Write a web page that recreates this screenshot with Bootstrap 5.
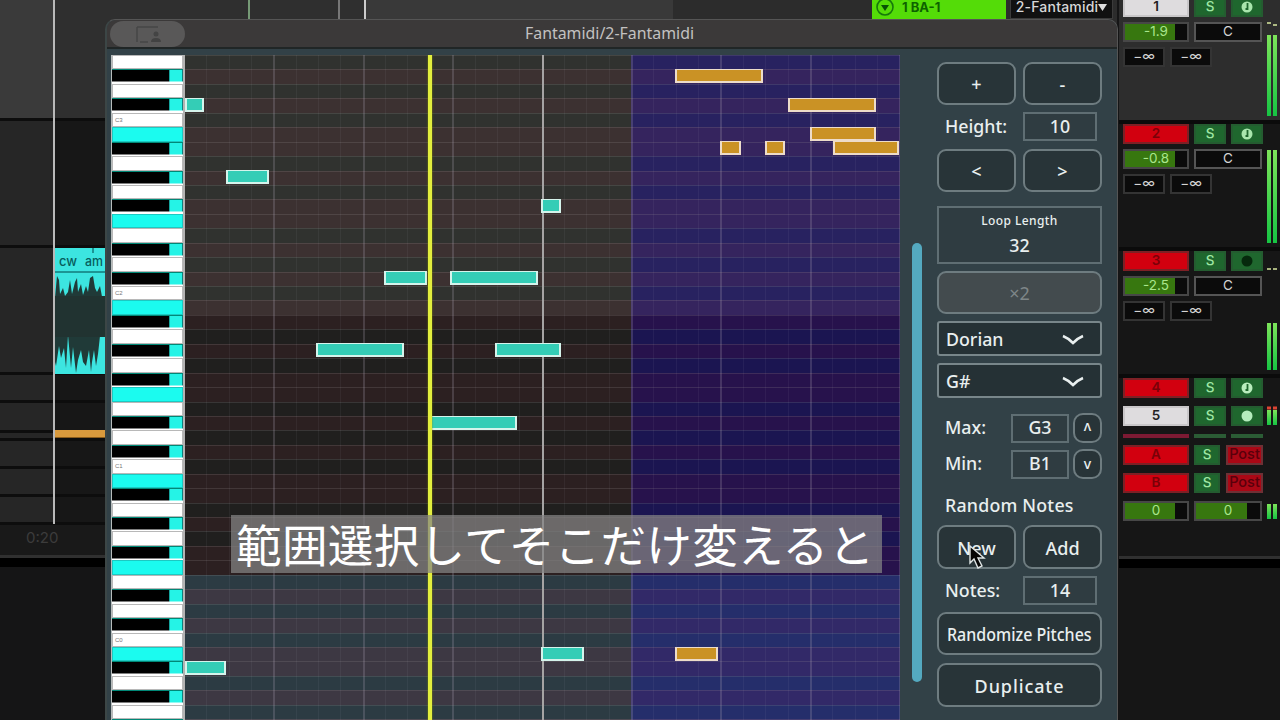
<!DOCTYPE html>
<html lang="ja">
<head>
<meta charset="utf-8">
<meta name="viewport" content="width=device-width, initial-scale=1">
<title>Fantamidi/2-Fantamidi</title>
<link rel="stylesheet" href="https://cdn.jsdelivr.net/npm/bootstrap@5.3.0/dist/css/bootstrap.min.css">
<style>
body{width:1280px;height:720px;overflow:hidden;background:#151516;font-family:"Noto Sans","Open Sans",sans-serif;line-height:1}
/* timeline behind the plugin window */
.lanes{width:1117px}
.lane{border-bottom:3px solid #0d0d0d;background:linear-gradient(90deg,#262626 55px,#171717 55px);flex:none}
.lane-top{background:linear-gradient(90deg,#3a3a3a 55px,#2f2f2f 55px 365px,#393939 365px 673px,#2c2c2c 673px)}
.wave{left:55px;top:248px}
.orange{left:55px;top:430px;width:50px;height:8px;background:#d99a3d;border-bottom:1px solid #8a5c1c}
.cursor-line{left:53px;top:0;width:2px;height:524px;background:#b9b9b9}
.tick{top:0;width:2px;height:20px;background:#a9a9a9}
.clock{left:26px;top:528px;font:15px Inter,sans-serif;color:#3c3c3c}
.clip-tag{left:872px;top:-6px;width:134px;height:25px;background:#54dc08;color:#0d6200;font:700 13px Inter,sans-serif;padding-left:4px}
.slot-tag{left:1010px;top:-6px;width:103px;height:25px;background:#111;border:1px solid #3b3b3b;color:#d8d8d8;font:500 14px Inter,sans-serif;letter-spacing:.2px;white-space:nowrap}
/* mixer */
.mixer{left:1119px;top:0;width:161px;height:720px;background:#161616;font-family:Inter,sans-serif}
.strip{height:127px;padding:0 0 0 4px;border-bottom:4px solid #0b0b0b;flex:none}
.cell{height:20px;border:2px solid #555;font-size:13.5px;color:#d4d4d4;background:#0b0b0b;display:flex;align-items:center;justify-content:center;flex:none}
.w-a{width:66px}.w-b{width:32px}.w-c{width:32px}.w-d{width:68px}.w-e{width:42px}.w-s{width:26px}.w-p{width:37px}
.cell.red{background:#d2000f;border-color:#7e2025;color:#7a0008;font-weight:600}
.cell.lit{background:#dedcde;border-color:#c9c7c9;color:#222;font-weight:600}
.cell.solo{background:#1f672e;border-color:#245c30;color:#9ee8a4;font-weight:500}
.cell.post{background:#aa0715;border-color:#6f3035;color:#59000b;font-size:14.5px;font-weight:500}
.cell.vol{background:linear-gradient(90deg,#37770f 80%,#0b0b0b 80%);border-color:#474747;color:#a9e68c}
.cell.send{border-color:#343434}
.mixer-end{height:12px;background:#000;border-top:3px solid #303030}
/* plugin window */
.plugin{left:105px;top:19px;width:1013px;height:710px;background:#324147;border-radius:10px 10px 0 0;border:1px solid #555;border-left:2px solid #3c4646;overflow:hidden}
.bar{height:29px;background:#3b3939;border-bottom:2px solid #202626;color:#c3c1c1;font-size:15.9px;padding-right:5px}
.pill{left:3px;top:1px;width:75px;height:26px;border-radius:13px;background:#595858}
.keys{width:74px;background:#fff;border-right:2px solid #b3b3b3;border-left:1px solid #b6bcbc}
.key{height:14.45px;flex:none}
.key.w{border:1px solid #b8b8b8;background:#fff;font:6px "Liberation Sans",sans-serif;color:#777;padding:3px 0 0 2px}
.key.hi{background:#1bfbef;border:1px solid #1cc9c2}
.key.b{background:linear-gradient(90deg,#000 57px,#15a49e 57px,#15a49e 58px,#25f3e6 58px,#25f3e6 70px,#127f7c 70px);background-size:100% 11.5px;background-repeat:no-repeat;border-top:1px solid #087}
.roll{width:715px;overflow:hidden}
.row-l{height:14.45px;flex:none}
.row-l.edge{border-top:1px solid rgba(155,150,150,.2)}
.vline{top:0;bottom:0;width:1px;background:rgba(190,190,200,.07)}
.vline.beat{width:2px;background:rgba(170,165,180,.24)}
.vline.bar-l{width:2px;background:#a5a3a3}
.note{height:14px;background:#34cdb6;border:2px solid #d5f4ec;border-top-width:1.5px}
.note.sel{background:#ca9225;border-color:#eddcca}
.play{left:243px;top:0;bottom:0;width:4px;background:#e2ee3e;box-shadow:0 0 2px #8b9400}
.tools{width:165px;color:#e9efef;font-size:17.8px;font-weight:500}
.tools .btn{height:43px;border:2px solid #6e7c80;border-radius:9px;background:#283438;color:#e9efef;font-size:18px;font-weight:500;padding:1px 0 0;line-height:1;flex:none;white-space:nowrap}
.tools .btn.half{width:79px}
.tools .btn.tiny{width:29px;height:30px;font-size:14px;border-radius:10px;padding:0}
.tools .btn.off{background:#434b4e;color:#7e8688;opacity:1;font-weight:400}
.numbox{border:2px solid #5f6e73;background:#2f3c41;display:flex;align-items:center;justify-content:center;height:29px}
.drop{height:35px;border:2px solid #78868a;border-radius:3px;background:#253135;padding:2px 16px 0 7px;flex:none}
.scroller{left:805px;top:223px;width:10px;height:439px;border-radius:5px;background:#54a9c0}
.caption-jp{left:231px;top:515px;width:651px;height:58px;background:rgba(133,133,133,.72);color:#fff;font-family:"Noto Sans CJK JP",sans-serif;font-size:45.6px;letter-spacing:.3px;line-height:57px;padding-left:5px;white-space:nowrap}
</style>
</head>
<body class="position-relative">
<main>
<section class="lanes d-flex flex-column">
  <div class="lane lane-top" style="height:121px"></div>
  <div class="lane" style="height:127px"></div>
  <div class="lane" style="height:127px"></div>
  <div class="lane" style="height:28px"></div>
  <div class="lane" style="height:30px"></div>
  <div class="lane" style="height:8px"></div>
  <div class="lane" style="height:28px"></div>
  <div class="lane" style="height:28px"></div>
  <div class="lane" style="height:28px"></div>
  <div style="height:30px;background:#191919"></div>
  <div class="mixer-end"></div>
</section>
<div class="cursor-line position-absolute"></div>
<div class="tick position-absolute" style="left:248px;background:#769a76"></div>
<div class="tick position-absolute" style="left:338px;background:#777"></div>
<div class="tick position-absolute" style="left:364px;background:#ccc"></div>
<svg class="wave position-absolute" width="52" height="126" viewBox="0 0 52 126">
  <rect width="52" height="126" fill="#3ce5e0"/>
  <path d="M0 24H52M38 0V5" stroke="#127b7b" stroke-width="1.5"/>
  <path d="M0 50l2-22 2 4 1 14 3-6 2 8 3-4 2-12 2 14 3-12 2-4 1 14 3-8 2 11 3-9 2 6 2-14 3-2 2 12 2 4 3-6 3 16V86l-3 2-2 18-2 12-2-16-2 12-1 10-2-22-3 16-3-4-2-12-3 10-2 13-3-26-2 21-3-33-2 33-2-20-3 10-2-12-3 20-2-8-1-26Z" fill="#203a38"/>
  <path d="M0 48H52V89H0Z" fill="#213331"/>
  <text x="4" y="18" font-family="Inter" font-size="13" font-weight="500" fill="#075d5c">cw</text>
  <text x="30" y="18" font-family="Inter" font-size="13" font-weight="500" textLength="18" lengthAdjust="spacingAndGlyphs" fill="#075d5c">am</text>
</svg>
<div class="orange position-absolute"></div>
<div class="clock position-absolute">0:20</div>
<div class="clip-tag position-absolute d-flex align-items-center gap-1">
  <svg width="18" height="20" viewBox="0 0 18 20"><circle cx="9" cy="10" r="8" fill="none" stroke="#16790b" stroke-width="1.6"/><path d="M5 8h8l-4 6Z" fill="#075204"/></svg><span class="ms-1">1 BA-1</span>
</div>
<div class="slot-tag position-absolute d-flex align-items-center justify-content-center"><span>2-Fantamidi</span><svg class="flex-shrink-0" width="9" height="8"><path d="M0 1h9L4.500 8Z" fill="#ddd"/></svg></div>

<aside class="mixer position-absolute">
  <div id="mix" class="d-flex flex-column" style="margin-top:-3.5px"></div>
  <svg class="position-absolute top-0" style="left:146px" width="15" height="560" id="meters"></svg>
</aside>

<section class="plugin position-absolute">
  <header class="bar position-relative d-flex align-items-center justify-content-center">
    <div class="pill position-absolute"><svg width="75" height="26"><path d="M27 6V21M27 6h21M30 21h8" stroke="#464646" stroke-width="1.5" fill="none"/><circle cx="46" cy="13" r="2.500" fill="#444"/><path d="M41 21q0-4 5-4t5 4Z" fill="#424242"/></svg></div>
    <span>Fantamidi/2-Fantamidi</span>
  </header>
  <div class="d-flex" style="padding-top:6px;padding-left:4px">
    <div id="keys" class="keys d-flex flex-column"></div>
    <div id="roll" class="roll position-relative"></div>
    <div class="tools d-flex flex-column" style="margin-left:37px;padding-top:7px">
      <div class="d-flex justify-content-between"><button class="btn half">+</button><button class="btn half">-</button></div>
      <div class="d-flex align-items-center justify-content-between" style="margin-top:7px;padding:0 5px 0 8px"><span>Height:</span><div class="numbox" style="width:74px">10</div></div>
      <div class="d-flex justify-content-between" style="margin-top:8px"><button class="btn half">&lt;</button><button class="btn half">&gt;</button></div>
      <div class="numbox flex-column" style="height:58px;margin-top:14px;gap:10px"><span style="font-size:12px;letter-spacing:.4px">Loop Length</span><span>32</span></div>
      <button class="btn off" style="margin-top:7px">×2</button>
      <div class="drop d-flex align-items-center justify-content-between" style="margin-top:7px"><span>Dorian</span><svg width="22" height="12"><path d="M1 2q5 2 10 7 5-5 10-7" fill="none" stroke="#e9efef" stroke-width="2.500"/></svg></div>
      <div class="drop d-flex align-items-center justify-content-between" style="margin-top:7px"><span>G#</span><svg width="22" height="12"><path d="M1 2q5 2 10 7 5-5 10-7" fill="none" stroke="#e9efef" stroke-width="2.500"/></svg></div>
      <div class="d-flex align-items-center" style="margin-top:15px;padding-left:8px"><span>Max:</span><div class="numbox ms-auto" style="width:58px;margin-right:4px">G3</div><button class="btn tiny"><span class="d-inline-block" style="transform:scaleY(-1)">v</span></button></div>
      <div class="d-flex align-items-center" style="margin-top:6px;padding-left:8px"><span>Min:</span><div class="numbox ms-auto" style="width:58px;margin-right:4px">B1</div><button class="btn tiny">v</button></div>
      <div style="margin-top:18px;padding-left:8px;height:17px;white-space:nowrap;letter-spacing:.2px">Random Notes</div>
      <div class="d-flex justify-content-between" style="margin-top:11px"><button class="btn half" style="height:44px">New</button><button class="btn half" style="height:44px">Add</button></div>
      <div class="d-flex align-items-center justify-content-between" style="margin-top:7px;padding:0 5px 0 8px"><span>Notes:</span><div class="numbox" style="width:74px">14</div></div>
      <button class="btn" style="margin-top:7px"><span class="d-inline-block" style="transform:scaleX(.89);margin:0 -12px">Randomize Pitches</span></button>
      <button class="btn" style="margin-top:8px;height:44px;letter-spacing:.9px">Duplicate</button>
    </div>
  </div>
  <div class="scroller position-absolute"></div>
</section>
<div class="caption-jp position-absolute">範囲選択してそこだけ変えると</div>
<svg class="position-absolute" style="left:969px;top:545px" width="18" height="25" viewBox="0 0 18 25"><path d="M1 1V18l4-4 4 9 4-2-4-8h6Z" fill="#050505" stroke="#dfe5e5" stroke-width="1.400"/></svg>
</main>
<script src="https://cdn.jsdelivr.net/npm/bootstrap@5.3.0/dist/js/bootstrap.bundle.min.js"></script>
<script>
const ROWS = 47, H = 14.45;
const black = [1,3,6,8,10], labels = {4:'C3',16:'C2',28:'C1',40:'C0'};
const octave = [
  {n:'#30322f', s:'#3c3131', sn:'#282260', ss:'#35245e'},
  {n:'#201f1e', s:'#2c2021', sn:'#1b1551', ss:'#27124c'},
  {n:'#2c3b43', s:'#3d3843', sn:'#252e6b', ss:'#322968'}];
let keys = '', rows = '';
for (let i = 0; i < ROWS; i++) {
  const k = i % 12, isB = black.includes(k), isC = k === 5 || k === 11;
  keys += `<div class="key ${isB ? 'b' : isC ? 'w hi' : 'w'}">${labels[i] || ''}</div>`;
  const o = octave[i < 18 ? 0 : i < 36 ? 1 : 2], sc = isB || isC;
  rows += `<div class="row-l edge" style="background:linear-gradient(90deg,${sc ? o.s : o.n} 446px,${sc ? o.ss : o.sn} 446px)"></div>`;
}
document.getElementById('keys').innerHTML = keys;
let over = '';
for (let j = 1; j <= 32; j++) {
  const x = j * 22.36 - 1.2;
  over += `<div class="vline position-absolute ${j === 16 ? 'bar-l' : j % 4 ? '' : 'beat'}" style="left:${x.toFixed(1)}px"></div>`;
}
/* notes: left x, width, row, selected */
[[0,19,3],[41,43,8],[356,20,10],[199,43,15],[265,88,15],[131,88,20],[310,66,20],[245,87,25],[356,43,41],[0,41,42],
 [490,88,1,1],[603,88,3,1],[625,66,5,1],[535,21,6,1],[580,20,6,1],[648,66,6,1],[490,43,41,1]]
.forEach(([x,w,r,s]) => over += `<div class="note position-absolute ${s ? 'sel' : ''}" style="left:${x}px;width:${w}px;top:${(r*H-.6).toFixed(1)}px"></div>`);
document.getElementById('roll').innerHTML = rows + over + '<div class="play position-absolute"></div>';

const disc = (c, note) => `<svg width="14" height="14"><circle cx="7" cy="7" r="5.500" fill="${c}"/>${note ? '<path d="M7.500 3V9H5.500" stroke="#1f672e" stroke-width="1.800" fill="none"/>' : ''}</svg>`;
const head = (n, cls, ic) => `<div class="d-flex" style="gap:5px"><div class="cell w-a ${cls}">${n}</div><div class="cell w-b solo">S</div><div class="cell w-c solo">${ic}</div></div>`;
const full = (n, cls, v, bg, ic) => `<div class="strip d-flex flex-column" style="gap:5px;background:${bg}">${head(n, cls, ic)}
 <div class="d-flex" style="gap:5px"><div class="cell vol w-a">${v}</div><div class="cell w-d">C</div></div>
 <div class="d-flex" style="gap:5px"><div class="cell send w-e">−∞</div><div class="cell send w-e">−∞</div></div></div>`;
const bus = n => `<div class="d-flex" style="gap:5px;margin-bottom:8px"><div class="cell w-a red">${n}</div><div class="cell w-s solo">S</div><div class="cell w-p post ms-auto">Post</div></div>`;
document.getElementById('mix').innerHTML =
  full(1,'lit','-1.9','#2d2d2d',disc('#a9e6ad',1)) + full(2,'red','-0.8','#161616',disc('#a9e6ad',1)) + full(3,'red','-2.5','#161616',disc('#06290d')) +
  `<div style="padding-left:4px;width:144px"><div style="margin-bottom:8px">${head(4,'red',disc('#b9edbd',1))}</div>${head(5,'lit',disc('#b5edbd'))}
   <div class="d-flex" style="gap:5px;margin:8px 0 7px"><div class="w-a" style="height:4px;background:#7d1a33"></div><div class="w-b" style="height:4px;background:#2b5c35"></div><div class="w-c" style="height:4px;background:#2b5c35"></div></div>
   ${bus('A')}${bus('B')}<div class="d-flex" style="gap:5px"><div class="cell vol w-a">0</div><div class="cell vol w-d">0</div></div></div>
   <div class="mixer-end" style="margin-top:35px"></div>`;
const m = [[35,116],[150,243],[323,370],[410,425],[504,519]];
document.getElementById('meters').innerHTML =
 '<defs><linearGradient id="g" x2="0" y2="1"><stop stop-color="#7de45a"/><stop offset="1" stop-color="#16c443"/></linearGradient></defs>' +
 m.map(([a,b]) => [2,8].map(x => `<rect x="${x}" y="${a}" width="4" height="${b-a}" fill="url(#g)"/>`).join('')).join('') +
 '<path d="M2 23h4M8 25h4M2 269h4M8 269h4" stroke="#d8e8a0" stroke-width="1.500"/><path d="M2 408h4M8 408h4" stroke="#d43" stroke-width="3"/>';
</script>
</body>
</html>
